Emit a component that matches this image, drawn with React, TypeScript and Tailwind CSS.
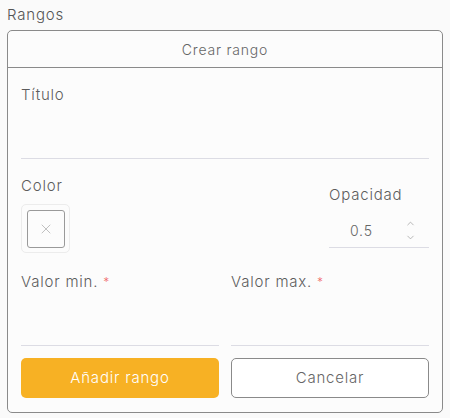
import { X, ChevronUp, ChevronDown } from 'lucide-react';

function Field({ label, required }: { label: string; required?: boolean }) {
  return (
    <div className="flex flex-col">
      <div className="h-[22px] text-[15px] leading-[22px] text-[#5c5c5c]">
        {label}
        {required && <span className="ml-[5px] align-top text-[12px] text-[#f06a6a]">*</span>}
      </div>
      <div className="h-[53px] border-b border-[#dcdce4]" />
    </div>
  );
}

export default function App() {
  return (
    <div
      className="h-[418px] w-[450px] bg-[#fafafa] px-[7px] pt-[4px] font-light tracking-[0.05em]"
      style={{ fontFamily: 'Inter, "Open Sans", sans-serif' }}
    >
      <div className="h-[26px] text-[15px] leading-[22px] text-[#555]">Rangos</div>
      <div className="overflow-hidden rounded-[5px] border border-[#8a8a8a] bg-[#fcfcfc]">
        <div className="flex h-[37px] items-center justify-center border-b border-[#8a8a8a] text-[14px] text-[#666]">
          Crear rango
        </div>
        <div className="px-[13px] pb-[14px] pt-[16px]">
          <Field label="Título" />
          <div className="mt-[16px] flex items-start justify-between">
            <div className="flex flex-col">
              <div className="h-[22px] text-[15px] leading-[22px] text-[#5c5c5c]">Color</div>
              <div className="mt-[7px] flex h-[49px] w-[49px] items-center justify-center rounded-[5px] border border-[#ececec]">
                <div className="flex h-[38px] w-[38px] items-center justify-center rounded-[3px] border border-[#9a9a9a]">
                  <X className="h-[16px] w-[16px] text-[#aaa]" strokeWidth={1.1} />
                </div>
              </div>
            </div>
            <div className="mt-[9px] flex w-[100px] flex-col">
              <div className="h-[22px] text-[15px] leading-[22px] text-[#5c5c5c]">Opacidad</div>
              <div className="mt-[8px] flex h-[34px] items-center border-b border-[#dcdce4]">
                <span className="ml-[21px] flex-1 text-[14px] text-[#666]">0.5</span>
                <div className="mr-[13px] flex flex-col items-center">
                  <ChevronUp className="h-[11px] w-[11px] text-[#999]" strokeWidth={1.5} />
                  <ChevronDown className="mt-[3px] h-[11px] w-[11px] text-[#999]" strokeWidth={1.5} />
                </div>
              </div>
            </div>
          </div>
          <div className="mt-[18px] grid grid-cols-2 gap-[12px]">
            <Field label="Valor min." required />
            <Field label="Valor max." required />
          </div>
          <div className="mt-[12px] grid grid-cols-2 gap-[12px]">
            <button className="h-[40px] rounded-[5px] bg-[#f7b124] text-[15px] text-white">Añadir rango</button>
            <button className="h-[40px] rounded-[5px] border border-[#8a8a8a] bg-white text-[15px] text-[#666]">
              Cancelar
            </button>
          </div>
        </div>
      </div>
    </div>
  );
}
